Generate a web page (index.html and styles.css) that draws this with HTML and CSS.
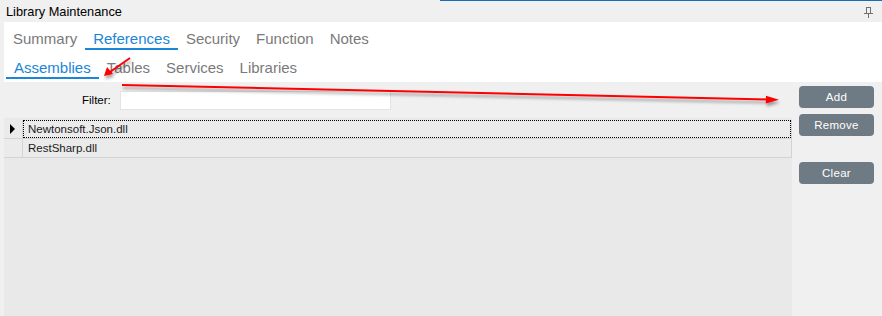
FILE: index.html
```html
<!DOCTYPE html>
<html lang="en">
<head>
    <meta charset="UTF-8">
    <title>Library Maintenance</title>
    <link rel="stylesheet" href="styles.css">
</head>
<body>
    <div class="window">
        <div class="titlebar">
            <span class="title">Library Maintenance</span>
            <svg class="pin" width="10" height="12" viewBox="0 0 10 12">
                <rect x="2.5" y="0.5" width="4" height="6" fill="none" stroke="#707070"/>
                <line x1="0" y1="6.5" x2="9" y2="6.5" stroke="#707070"/>
                <line x1="4.5" y1="7" x2="4.5" y2="11" stroke="#707070"/>
            </svg>
        </div>

        <div class="tabs">
            <div class="tab-row main-tabs">
                <span class="tab">Summary</span>
                <span class="tab active">References</span>
                <span class="tab">Security</span>
                <span class="tab">Function</span>
                <span class="tab">Notes</span>
            </div>
            <div class="tab-row sub-tabs">
                <span class="tab active">Assemblies</span>
                <span class="tab">Tables</span>
                <span class="tab">Services</span>
                <span class="tab">Libraries</span>
            </div>
        </div>

        <div class="content">
            <div class="list-area">
                <div class="filter">
                    <label for="filter">Filter:</label>
                    <input type="text" id="filter">
                </div>
                <div class="grid">
                    <div class="row current">
                        <div class="row-header"><span class="marker"></span></div>
                        <div class="cell"><span class="focus">Newtonsoft.Json.dll</span></div>
                    </div>
                    <div class="row">
                        <div class="row-header"></div>
                        <div class="cell"><span>RestSharp.dll</span></div>
                    </div>
                </div>
            </div>
            <div class="buttons">
                <button>Add</button>
                <button>Remove</button>
                <button class="spaced">Clear</button>
            </div>
        </div>

        <!-- annotation arrows drawn over the screenshot -->
        <svg class="annotations" width="882" height="316" viewBox="0 0 882 316">
            <defs>
                <filter id="shadow" x="-10%" y="-50%" width="120%" height="300%">
                    <feDropShadow dx="1" dy="3" stdDeviation="1.6" flood-color="#000" flood-opacity="0.35"/>
                </filter>
            </defs>
            <g filter="url(#shadow)">
                <line x1="130" y1="58" x2="110" y2="72" stroke="#f00" stroke-width="2"/>
                <polygon points="104,76 107,67 113,74" fill="#f00"/>
                <line x1="122" y1="85" x2="768" y2="99.4" stroke="#f00" stroke-width="2"/>
                <polygon points="779,99.7 766,95.8 765.8,103.4" fill="#f00"/>
            </g>
        </svg>
    </div>
</body>
</html>
```

FILE: styles.css
```css
body {
    margin: 0;
    background: #f0f0f0;
    font-family: "Liberation Sans", Arial, sans-serif;
    color: #000;
}

.window {
    position: relative;
    width: 882px;
    height: 316px;
    overflow: hidden;
}

/* partial window edge along the top */
.window::before {
    content: "";
    display: block;
    height: 1px;
    margin-left: 440px;
    background: #1c6cb0;
}

.titlebar {
    height: 21px;
    display: flex;
    align-items: center;
    justify-content: space-between;
    padding: 0 8px 0 6px;
}

.title {
    font-size: 12.8px;
}

.pin {
    margin-top: 2px;
}

.tabs {
    background: #ffffff;
    margin-left: 4px;
    height: 60px;
    padding-top: 7px;
    box-sizing: border-box;
}

.tab-row {
    display: flex;
}

.main-tabs {
    margin-left: 1px;
}

.sub-tabs {
    margin-left: 2px;
    margin-top: 8px;
}

.tab {
    font-size: 15px;
    line-height: 19px;
    padding: 0 8px 0 8px;
    color: #7a7a7a;
    border-bottom: 2px solid transparent;
}

.tab.active {
    color: #1a86d6;
    border-bottom-color: #1a86d6;
}

.content {
    display: flex;
    height: 234px;
}

.list-area {
    margin-left: 4px;
    width: 788px;
    display: flex;
    flex-direction: column;
}

.filter {
    height: 36px;
    display: flex;
    align-items: center;
    padding-left: 78px;
    gap: 9px;
    font-size: 11.5px;
}

.filter input {
    width: 271px;
    height: 19px;
    box-sizing: border-box;
    border: 1px solid #e3e3e3;
    background: #ffffff;
    margin: 0;
    margin-top: 1px;
    outline: none;
}

.grid {
    flex: 1;
    background: #e9e9e9;
    padding-top: 2px;
    font-size: 11.5px;
}

.row {
    display: flex;
    height: 19px;
}

.row-header {
    width: 19px;
    border-right: 1px solid #d4d4d4;
    border-bottom: 1px solid #d4d4d4;
    display: flex;
    align-items: center;
    padding-left: 6px;
    box-sizing: border-box;
    background: #ebebeb;
}

.marker {
    width: 0;
    height: 0;
    border-top: 5px solid transparent;
    border-bottom: 5px solid transparent;
    border-left: 5px solid #000;
}

.cell {
    flex: 1;
    display: flex;
    border-right: 1px solid #d4d4d4;
    border-bottom: 1px solid #d4d4d4;
    background: #ebebeb;
}

.cell span {
    flex: 1;
    display: flex;
    align-items: center;
    padding-left: 5px;
    color: #1a1a1a;
}

.cell .focus {
    outline: 1px dotted #000;
    outline-offset: -1px;
}

.buttons {
    display: flex;
    flex-direction: column;
    padding: 4px 0 0 7px;
    gap: 6px;
}

.buttons button {
    width: 75px;
    height: 22px;
    border: none;
    border-radius: 4px;
    background: #6f7b84;
    color: #ffffff;
    font-family: "Liberation Sans", Arial, sans-serif;
    font-size: 11.5px;
    letter-spacing: 0.3px;
    padding: 0;
}

.buttons .spaced {
    margin-top: 20px;
}

.annotations {
    position: absolute;
    top: 0;
    left: 0;
    pointer-events: none;
}
```
